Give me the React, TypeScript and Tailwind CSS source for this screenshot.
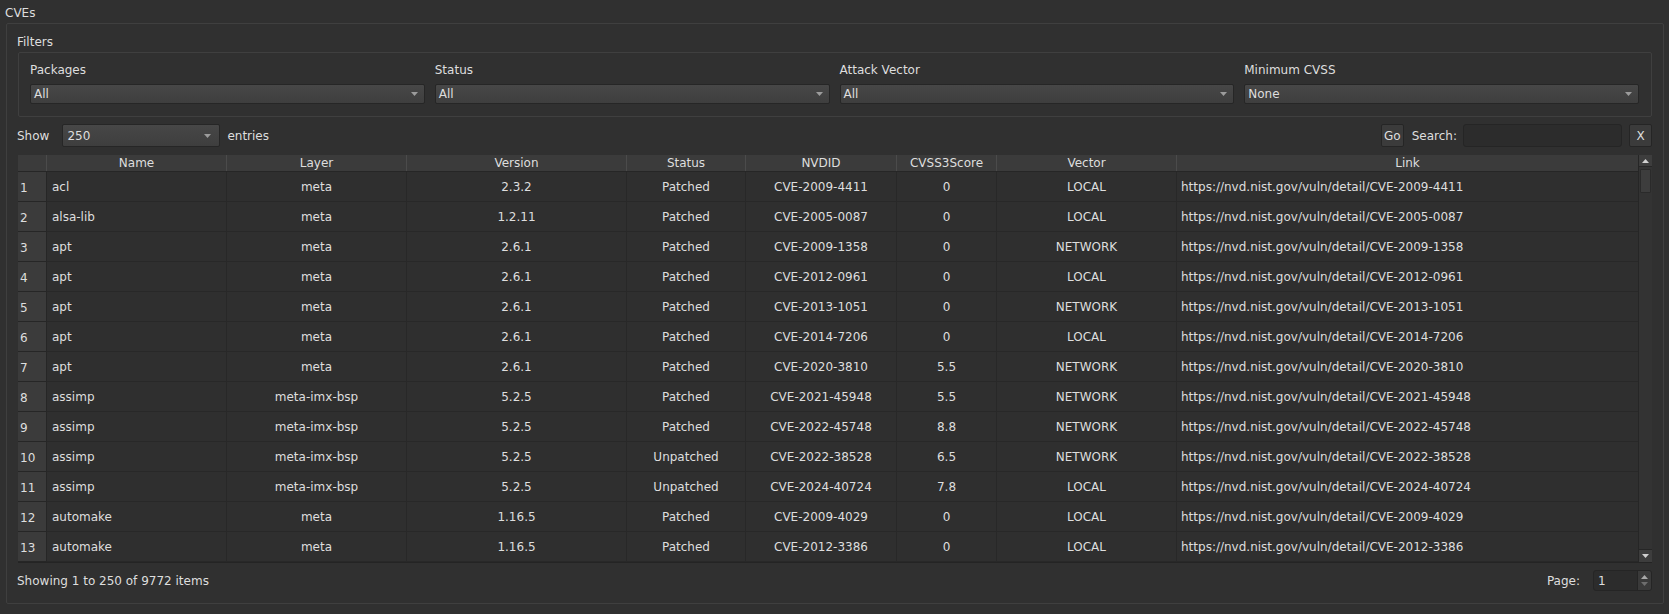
import React from "react";

const rows: string[][] = [
  ["acl", "meta", "2.3.2", "Patched", "CVE-2009-4411", "0", "LOCAL"],
  ["alsa-lib", "meta", "1.2.11", "Patched", "CVE-2005-0087", "0", "LOCAL"],
  ["apt", "meta", "2.6.1", "Patched", "CVE-2009-1358", "0", "NETWORK"],
  ["apt", "meta", "2.6.1", "Patched", "CVE-2012-0961", "0", "LOCAL"],
  ["apt", "meta", "2.6.1", "Patched", "CVE-2013-1051", "0", "NETWORK"],
  ["apt", "meta", "2.6.1", "Patched", "CVE-2014-7206", "0", "LOCAL"],
  ["apt", "meta", "2.6.1", "Patched", "CVE-2020-3810", "5.5", "NETWORK"],
  ["assimp", "meta-imx-bsp", "5.2.5", "Patched", "CVE-2021-45948", "5.5", "NETWORK"],
  ["assimp", "meta-imx-bsp", "5.2.5", "Patched", "CVE-2022-45748", "8.8", "NETWORK"],
  ["assimp", "meta-imx-bsp", "5.2.5", "Unpatched", "CVE-2022-38528", "6.5", "NETWORK"],
  ["assimp", "meta-imx-bsp", "5.2.5", "Unpatched", "CVE-2024-40724", "7.8", "LOCAL"],
  ["automake", "meta", "1.16.5", "Patched", "CVE-2009-4029", "0", "LOCAL"],
  ["automake", "meta", "1.16.5", "Patched", "CVE-2012-3386", "0", "LOCAL"],
];

const headers = ["Name", "Layer", "Version", "Status", "NVDID", "CVSS3Score", "Vector", "Link"];

const filters = [
  { label: "Packages", value: "All" },
  { label: "Status", value: "All" },
  { label: "Attack Vector", value: "All" },
  { label: "Minimum CVSS", value: "None" },
];

function Caret({ up = false, color = "#9c9c9c" }: { up?: boolean; color?: string }) {
  return (
    <svg width="7" height="4" viewBox="0 0 7 4">
      <path d={up ? "M0 4h7L3.5 0z" : "M0 0h7L3.5 4z"} fill={color} />
    </svg>
  );
}

function Combo({ value, className = "" }: { value: string; className?: string }) {
  return (
    <div
      className={`flex items-center justify-between rounded-[2px] border border-[#262626] bg-gradient-to-b from-[#474747] to-[#3e3e3e] pl-[3px] pr-[6px] ${className}`}
    >
      <span>{value}</span>
      <Caret />
    </div>
  );
}

export default function App() {
  const cols = "grid grid-cols-[29px_180px_180px_220px_119px_151px_100px_180px_1fr]";

  return (
    <div className="h-[614px] w-full overflow-hidden bg-[#303030] font-['DejaVu_Sans',sans-serif] text-[12px] leading-[14px] text-[#dedede]">
      {/* Title */}
      <div className="ml-[5px] pt-[6px] mb-[3px]">CVEs</div>

      {/* CVEs group box */}
      <div className="ml-[6px] flex h-[581px] w-[1658px] flex-col rounded-[2px] border border-[#3f3f3f] px-[11px] pt-[11px]">
        <div className="mb-[3px] -ml-[1px]">Filters</div>

        {/* Filters group box */}
        <div className="h-[65px] rounded-[2px] border border-[#3f3f3f] pl-[11px] pr-[12px] pt-[10px]">
          <div className="grid grid-cols-4 gap-x-[10px]">
            {filters.map((f) => (
              <div key={f.label} className="flex flex-col">
                <span className="mb-[7px]">{f.label}</span>
                <Combo value={f.value} className="h-[20px]" />
              </div>
            ))}
          </div>
        </div>

        {/* Show / search row */}
        <div className="mt-[7px] flex h-[23px] items-center">
          <span className="-ml-[1px]">Show</span>
          <Combo value="250" className="ml-[13px] h-[23px] w-[158px] pl-[4px] pr-[8px]" />
          <span className="ml-[7px]">entries</span>
          <div className="ml-auto flex h-full items-center">
            <button className="flex h-[23px] w-[23px] items-center justify-center rounded-[2px] border border-[#252525] bg-[#3b3b3b]">
              Go
            </button>
            <span className="ml-[8px]">Search:</span>
            <div className="ml-[6px] h-[23px] w-[159px] rounded-[3px] border border-[#252525] bg-[#2c2c2c]" />
            <button className="ml-[7px] flex h-[23px] w-[23px] items-center justify-center rounded-[2px] border border-[#252525] bg-[#3b3b3b]">
              X
            </button>
          </div>
        </div>

        {/* Table */}
        <div className="mt-[8px] flex h-[408px] border-b border-[#242424]">
          <div className="flex flex-1 flex-col overflow-hidden">
            <div className={`${cols} h-[17px] border-b border-[#262626] bg-[#3b3b3b] leading-[16px]`}>
              <div className="border-r border-[#4b4b4b]" />
              {headers.map((h) => (
                <div key={h} className="border-r border-[#4b4b4b] text-center last:border-r-0">
                  {h}
                </div>
              ))}
            </div>
            <div className="flex-1 overflow-hidden bg-[#2f2f2f]">
              {rows.map((r, i) => (
                <div key={i} className={`${cols} h-[30px]`}>
                  <div className="flex items-center border-b border-r border-[#262626] bg-[#3b3b3b] pl-[2px] pt-[2px]">
                    {i + 1}
                  </div>
                  <div className="flex items-center border-b border-r border-[#282828] pl-[5px]">{r[0]}</div>
                  {r.slice(1).map((c, j) => (
                    <div key={j} className="flex items-center justify-center border-b border-r border-[#282828]">
                      {c}
                    </div>
                  ))}
                  <div className="flex items-center border-b border-[#282828] pl-[4px]">
                    https://nvd.nist.gov/vuln/detail/{r[4]}
                  </div>
                </div>
              ))}
            </div>
          </div>

          {/* Scrollbar */}
          <div className="flex w-[14px] flex-col border-l border-[#262626] bg-[#333333]">
            <div className="flex h-[12px] items-center justify-center border-b border-[#262626] bg-[#3d3d3d]">
              <Caret up color="#d0d0d0" />
            </div>
            <div className="mx-[1px] mt-[2px] h-[24px] rounded-[1px] border border-[#2a2a2a] bg-[#3d3d3d]" />
            <div className="flex-1" />
            <div className="flex h-[13px] items-center justify-center border-t border-[#262626] bg-[#3d3d3d]">
              <Caret color="#d0d0d0" />
            </div>
          </div>
        </div>

        {/* Footer */}
        <div className="mt-[7px] flex h-[21px] items-center">
          <span className="-ml-[1px]">Showing 1 to 250 of 9772 items</span>
          <span className="ml-auto">Page:</span>
          <div className="ml-[13px] flex h-[21px] w-[59px] overflow-hidden rounded-[3px] border border-[#252525] bg-[#2c2c2c]">
            <span className="flex flex-1 items-center pl-[4px]">1</span>
            <div className="flex w-[14px] flex-col items-center justify-center gap-[3px] border-l border-[#252525] bg-[#3a3a3a]">
              <Caret up color="#a8a8a8" />
              <Caret color="#6e6e6e" />
            </div>
          </div>
        </div>
      </div>
    </div>
  );
}
